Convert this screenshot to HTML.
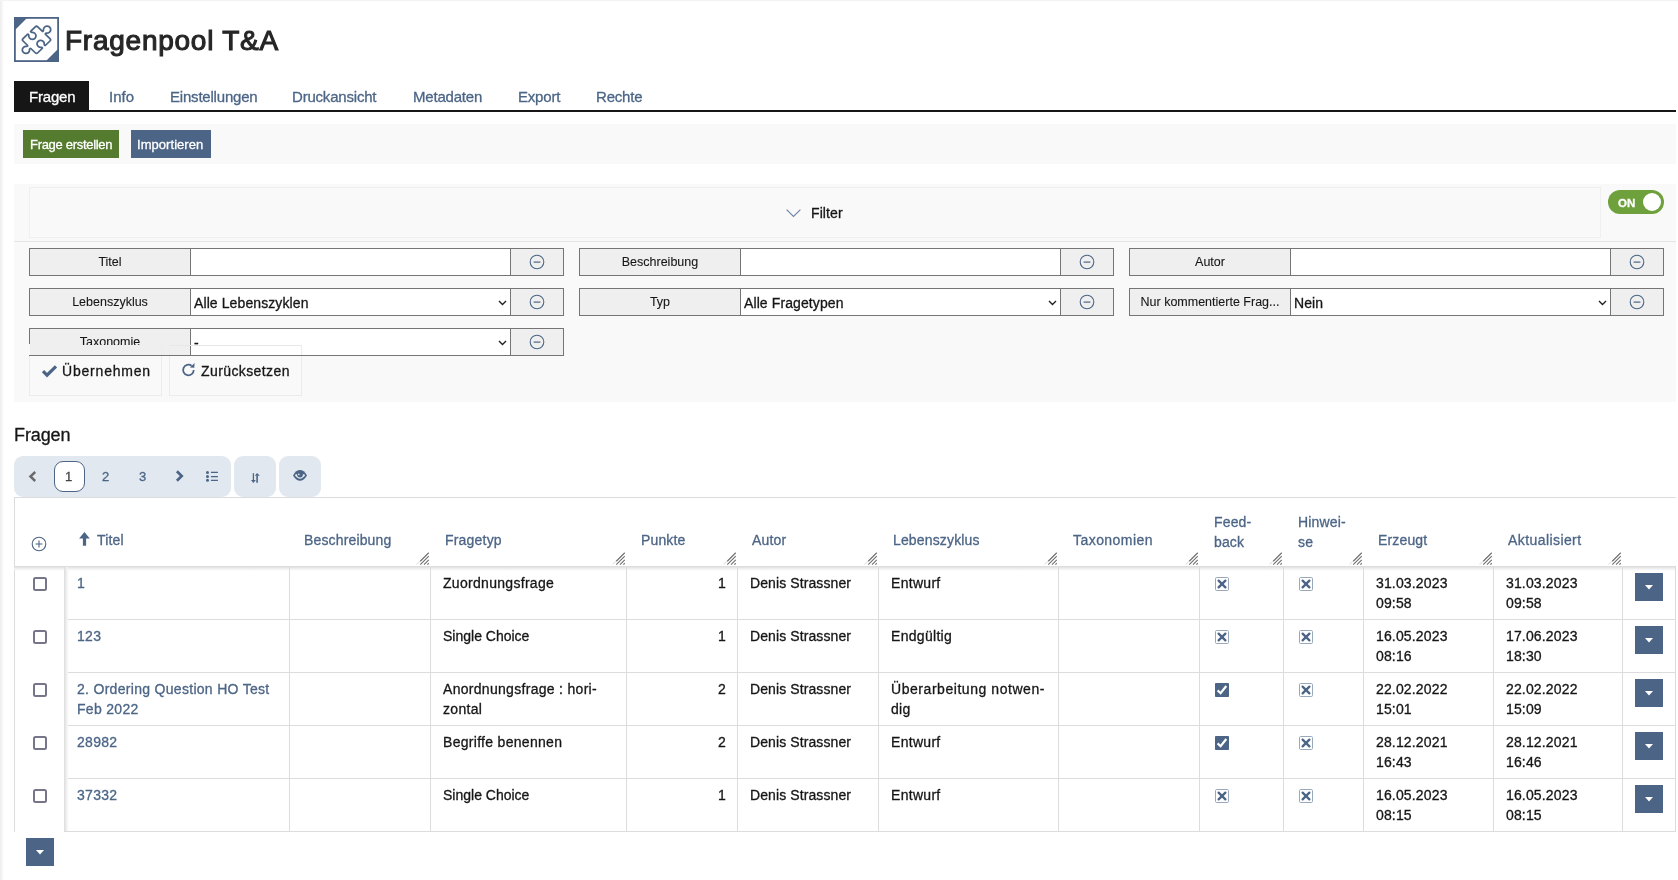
<!DOCTYPE html><html><head><meta charset="utf-8"><style>
html,body{margin:0;padding:0;}
body{width:1678px;height:880px;position:relative;overflow:hidden;background:#fff;font-family:"Liberation Sans",sans-serif;}
.a{position:absolute;box-sizing:border-box;}
.t{position:absolute;white-space:nowrap;will-change:transform;-webkit-text-stroke-width:0.3px;}
svg.a{overflow:visible}
</style></head><body>
<div class="a" style="left:0px;top:0px;width:4px;height:880px;background:linear-gradient(to right,#ececec,#f6f6f6 50%,#fff)"></div>
<div class="a" style="left:0px;top:0px;width:1678px;height:1px;background:#f3f3f3"></div>
<svg class="a" style="left:14px;top:17px" width="45" height="45" viewBox="0 0 45 45"><rect x="0.9" y="0.9" width="43.2" height="43.2" fill="#fff" stroke="#4c6586" stroke-width="1.8"/><path d="M0 0H14L0 14Z" fill="#4c6586"/><path d="M45 45H31L45 31Z" fill="#4c6586"/><path transform="translate(22.5 22.8) scale(1.04 1) translate(-22.5 -22.5) rotate(45 22.5 22.5)" d="M14.2 12.5 H20.2 C20.9 12.5 21.1 11.8 20.5 11 A3.5 3.5 0 1 1 24.5 11 C23.9 11.8 24.1 12.5 24.8 12.5 H30.8 Q32.5 12.5 32.5 14.2 V20.2 C32.5 20.9 31.8 21.1 31 20.5 A3.5 3.5 0 1 0 31 24.5 C31.8 23.9 32.5 24.1 32.5 24.8 V30.8 Q32.5 32.5 30.8 32.5 H24.8 C24.1 32.5 23.9 33.2 24.5 34 A3.5 3.5 0 1 1 20.5 34 C21.1 33.2 20.9 32.5 20.2 32.5 H14.2 Q12.5 32.5 12.5 30.8 V24.8 C12.5 24.1 13.2 23.9 14 24.5 A3.5 3.5 0 1 0 14 20.5 C13.2 21.1 12.5 20.9 12.5 20.2 V14.2 Q12.5 12.5 14.2 12.5 Z" fill="none" stroke="#4c6586" stroke-width="1.7" stroke-linejoin="round"/></svg>
<div class="t" style="top:23.70px;font-size:28px;line-height:34px;color:#262626;letter-spacing:0.75px;left:65.4px;-webkit-text-stroke:1.1px #262626;">Fragenpool T&amp;A</div>
<div class="a" style="left:14px;top:81px;width:75px;height:30px;background:#161616"></div>
<div class="a" style="left:14px;top:110px;width:1662px;height:2px;background:#161616"></div>
<div class="t" style="top:86.80px;font-size:15px;line-height:20px;color:#fff;letter-spacing:-0.2px;left:28.5px;">Fragen</div>
<div class="t" style="top:86.80px;font-size:15px;line-height:20px;color:#4c6586;left:108.5px;">Info</div>
<div class="t" style="top:86.80px;font-size:15px;line-height:20px;color:#4c6586;letter-spacing:-0.2px;left:169.5px;">Einstellungen</div>
<div class="t" style="top:86.80px;font-size:15px;line-height:20px;color:#4c6586;letter-spacing:-0.2px;left:291.5px;">Druckansicht</div>
<div class="t" style="top:86.80px;font-size:15px;line-height:20px;color:#4c6586;letter-spacing:-0.2px;left:412.5px;">Metadaten</div>
<div class="t" style="top:86.80px;font-size:15px;line-height:20px;color:#4c6586;letter-spacing:-0.2px;left:517.5px;">Export</div>
<div class="t" style="top:86.80px;font-size:15px;line-height:20px;color:#4c6586;letter-spacing:-0.2px;left:595.5px;">Rechte</div>
<div class="a" style="left:14px;top:124px;width:1662px;height:40px;background:#f9f9f9"></div>
<div class="a" style="left:23px;top:130px;width:96px;height:28px;background:#557b2e"></div>
<div class="t" style="top:137.00px;font-size:13px;line-height:16px;color:#fff;letter-spacing:-0.3px;left:30px;">Frage erstellen</div>
<div class="a" style="left:131px;top:130px;width:80px;height:28px;background:#4c6586"></div>
<div class="t" style="top:137.00px;font-size:13px;line-height:16px;color:#fff;letter-spacing:0.05px;left:137px;">Importieren</div>
<div class="a" style="left:14px;top:184px;width:1662px;height:218px;background:#f9f9f9"></div>
<div class="a" style="left:29px;top:187px;width:1572px;height:51px;border:1px solid #efefef"></div>
<div class="a" style="left:14px;top:241px;width:1662px;height:1px;background:#e4e4e4"></div>
<svg class="a" style="left:786px;top:209px" width="15" height="8" viewBox="0 0 15 8"><path d="M0.6 0.6 L7.5 7.4 L14.4 0.6" fill="none" stroke="#6b83a3" stroke-width="1.1"/></svg>
<div class="t" style="top:203.85px;font-size:14px;line-height:18px;color:#161616;letter-spacing:0.1px;left:811px;">Filter</div>
<div class="a" style="left:1608px;top:190px;width:56px;height:24px;background:#6ea03c;border-radius:12px"></div>
<div class="a" style="left:1643px;top:193px;width:18px;height:18px;background:#fff;border-radius:50%"></div>
<div class="t" style="top:195.62px;font-size:11.5px;line-height:14px;color:#fff;font-weight:bold;left:1618px;">ON</div>
<div class="a" style="left:29px;top:248px;width:162px;height:28px;background:#efefef;border:1px solid #757575"></div>
<div class="a" style="left:190px;top:248px;width:321px;height:28px;background:#fff;border:1px solid #757575"></div>
<div class="a" style="left:510px;top:248px;width:54px;height:28px;background:#efefef;border:1px solid #757575"></div>
<div class="t" style="top:253.97px;font-size:12.5px;line-height:16px;color:#161616;left:30.0px;width:160px;text-align:center;-webkit-text-stroke-width:0.1px;">Titel</div>
<svg class="a" style="left:528.5px;top:253.8px" width="16" height="16" viewBox="0 0 16 16"><circle cx="8" cy="8" r="6.8" fill="none" stroke="#4c6586" stroke-width="1.1"/><path d="M4.6 8.1H11.4" stroke="#4c6586" stroke-width="1.2"/></svg>
<div class="a" style="left:579px;top:248px;width:162px;height:28px;background:#efefef;border:1px solid #757575"></div>
<div class="a" style="left:740px;top:248px;width:321px;height:28px;background:#fff;border:1px solid #757575"></div>
<div class="a" style="left:1060px;top:248px;width:54px;height:28px;background:#efefef;border:1px solid #757575"></div>
<div class="t" style="top:253.97px;font-size:12.5px;line-height:16px;color:#161616;left:580.0px;width:160px;text-align:center;-webkit-text-stroke-width:0.1px;">Beschreibung</div>
<svg class="a" style="left:1078.5px;top:253.8px" width="16" height="16" viewBox="0 0 16 16"><circle cx="8" cy="8" r="6.8" fill="none" stroke="#4c6586" stroke-width="1.1"/><path d="M4.6 8.1H11.4" stroke="#4c6586" stroke-width="1.2"/></svg>
<div class="a" style="left:1129px;top:248px;width:162px;height:28px;background:#efefef;border:1px solid #757575"></div>
<div class="a" style="left:1290px;top:248px;width:321px;height:28px;background:#fff;border:1px solid #757575"></div>
<div class="a" style="left:1610px;top:248px;width:54px;height:28px;background:#efefef;border:1px solid #757575"></div>
<div class="t" style="top:253.97px;font-size:12.5px;line-height:16px;color:#161616;left:1130.0px;width:160px;text-align:center;-webkit-text-stroke-width:0.1px;">Autor</div>
<svg class="a" style="left:1628.5px;top:253.8px" width="16" height="16" viewBox="0 0 16 16"><circle cx="8" cy="8" r="6.8" fill="none" stroke="#4c6586" stroke-width="1.1"/><path d="M4.6 8.1H11.4" stroke="#4c6586" stroke-width="1.2"/></svg>
<div class="a" style="left:29px;top:288px;width:162px;height:28px;background:#efefef;border:1px solid #757575"></div>
<div class="a" style="left:190px;top:288px;width:321px;height:28px;background:#fff;border:1px solid #757575"></div>
<div class="a" style="left:510px;top:288px;width:54px;height:28px;background:#efefef;border:1px solid #757575"></div>
<div class="t" style="top:293.97px;font-size:12.5px;line-height:16px;color:#161616;left:30.0px;width:160px;text-align:center;-webkit-text-stroke-width:0.1px;">Lebenszyklus</div>
<div class="t" style="top:293.65px;font-size:14px;line-height:18px;color:#161616;letter-spacing:0.1px;left:194px;">Alle Lebenszyklen</div>
<svg class="a" style="left:498.2px;top:299.5px" width="9" height="6" viewBox="0 0 9 6"><path d="M1 1 L4.5 4.5 L8 1" fill="none" stroke="#222" stroke-width="1.4"/></svg>
<svg class="a" style="left:528.5px;top:293.8px" width="16" height="16" viewBox="0 0 16 16"><circle cx="8" cy="8" r="6.8" fill="none" stroke="#4c6586" stroke-width="1.1"/><path d="M4.6 8.1H11.4" stroke="#4c6586" stroke-width="1.2"/></svg>
<div class="a" style="left:579px;top:288px;width:162px;height:28px;background:#efefef;border:1px solid #757575"></div>
<div class="a" style="left:740px;top:288px;width:321px;height:28px;background:#fff;border:1px solid #757575"></div>
<div class="a" style="left:1060px;top:288px;width:54px;height:28px;background:#efefef;border:1px solid #757575"></div>
<div class="t" style="top:293.97px;font-size:12.5px;line-height:16px;color:#161616;left:580.0px;width:160px;text-align:center;-webkit-text-stroke-width:0.1px;">Typ</div>
<div class="t" style="top:293.65px;font-size:14px;line-height:18px;color:#161616;letter-spacing:0.1px;left:744px;">Alle Fragetypen</div>
<svg class="a" style="left:1048.2px;top:299.5px" width="9" height="6" viewBox="0 0 9 6"><path d="M1 1 L4.5 4.5 L8 1" fill="none" stroke="#222" stroke-width="1.4"/></svg>
<svg class="a" style="left:1078.5px;top:293.8px" width="16" height="16" viewBox="0 0 16 16"><circle cx="8" cy="8" r="6.8" fill="none" stroke="#4c6586" stroke-width="1.1"/><path d="M4.6 8.1H11.4" stroke="#4c6586" stroke-width="1.2"/></svg>
<div class="a" style="left:1129px;top:288px;width:162px;height:28px;background:#efefef;border:1px solid #757575"></div>
<div class="a" style="left:1290px;top:288px;width:321px;height:28px;background:#fff;border:1px solid #757575"></div>
<div class="a" style="left:1610px;top:288px;width:54px;height:28px;background:#efefef;border:1px solid #757575"></div>
<div class="t" style="top:293.97px;font-size:12.5px;line-height:16px;color:#161616;left:1130.0px;width:160px;text-align:center;-webkit-text-stroke-width:0.1px;">Nur kommentierte Frag...</div>
<div class="t" style="top:293.65px;font-size:14px;line-height:18px;color:#161616;letter-spacing:0.1px;left:1294px;">Nein</div>
<svg class="a" style="left:1598.2px;top:299.5px" width="9" height="6" viewBox="0 0 9 6"><path d="M1 1 L4.5 4.5 L8 1" fill="none" stroke="#222" stroke-width="1.4"/></svg>
<svg class="a" style="left:1628.5px;top:293.8px" width="16" height="16" viewBox="0 0 16 16"><circle cx="8" cy="8" r="6.8" fill="none" stroke="#4c6586" stroke-width="1.1"/><path d="M4.6 8.1H11.4" stroke="#4c6586" stroke-width="1.2"/></svg>
<div class="a" style="left:29px;top:328px;width:162px;height:28px;background:#efefef;border:1px solid #757575"></div>
<div class="a" style="left:190px;top:328px;width:321px;height:28px;background:#fff;border:1px solid #757575"></div>
<div class="a" style="left:510px;top:328px;width:54px;height:28px;background:#efefef;border:1px solid #757575"></div>
<div class="t" style="top:333.65px;font-size:14px;line-height:18px;color:#161616;letter-spacing:0.1px;left:194px;">-</div>
<svg class="a" style="left:498.2px;top:339.5px" width="9" height="6" viewBox="0 0 9 6"><path d="M1 1 L4.5 4.5 L8 1" fill="none" stroke="#222" stroke-width="1.4"/></svg>
<svg class="a" style="left:528.5px;top:333.8px" width="16" height="16" viewBox="0 0 16 16"><circle cx="8" cy="8" r="6.8" fill="none" stroke="#4c6586" stroke-width="1.1"/><path d="M4.6 8.1H11.4" stroke="#4c6586" stroke-width="1.2"/></svg>
<div class="a" style="left:30px;top:329px;width:160px;height:16px;overflow:hidden"><div class="t" style="left:0;width:160px;text-align:center;top:4.6px;font-size:12.5px;line-height:16px;color:#161616;-webkit-text-stroke-width:0.1px">Taxonomie</div></div>
<div class="a" style="left:29px;top:345px;width:133px;height:51px;border:1px solid #ececec;border-top-color:transparent"></div>
<div class="a" style="left:169px;top:345px;width:133px;height:51px;border:1px solid #ececec"></div>
<div class="a" style="left:29px;top:344px;width:1px;height:11px;background:#f9f9f9"></div>
<div class="a" style="left:170px;top:345px;width:131px;height:1px;background:#e8e8e8"></div>
<div class="a" style="left:29px;top:355px;width:535px;height:1px;background:#757575"></div>
<svg class="a" style="left:42px;top:364.5px" width="15" height="12" viewBox="0 0 15 12"><path d="M1 6.2 L5 10.2 L14 1.3" fill="none" stroke="#4c6586" stroke-width="3.2" stroke-linejoin="miter"/></svg>
<div class="t" style="top:361.65px;font-size:14px;line-height:18px;color:#161616;letter-spacing:0.8px;left:62px;">&Uuml;bernehmen</div>
<svg class="a" style="left:181px;top:363px" width="15" height="14" viewBox="0 0 15 14"><path d="M12.7 7 A5.3 5.3 0 1 1 10.6 2.8" fill="none" stroke="#4c6586" stroke-width="1.8"/><path d="M8.9 4.6 L13.6 0.1 L13.3 4.8 Z" fill="#4c6586"/></svg>
<div class="t" style="top:361.65px;font-size:14px;line-height:18px;color:#161616;letter-spacing:0.4px;left:201px;">Zur&uuml;cksetzen</div>
<div class="t" style="top:423.76px;font-size:18px;line-height:22px;color:#161616;letter-spacing:-0.1px;left:13.5px;">Fragen</div>
<div class="a" style="left:14px;top:456px;width:217px;height:41px;background:#e2e8ef;border-radius:9px"></div>
<div class="a" style="left:234px;top:456px;width:42px;height:41px;background:#e2e8ef;border-radius:9px"></div>
<div class="a" style="left:279px;top:456px;width:42px;height:41px;background:#e2e8ef;border-radius:9px"></div>
<div class="a" style="left:54px;top:461px;width:31px;height:31px;background:#fff;border:1.5px solid #4c6586;border-radius:9px"></div>
<svg class="a" style="left:28px;top:471px" width="9" height="11" viewBox="0 0 9 11"><path d="M7.2 1 L2.4 5.5 L7.2 10" fill="none" stroke="#6a6a6a" stroke-width="2.4"/></svg>
<div class="t" style="top:468.50px;font-size:13px;line-height:16px;color:#444;left:65px;">1</div>
<div class="t" style="top:468.50px;font-size:13px;line-height:16px;color:#4c6586;left:102px;">2</div>
<div class="t" style="top:468.50px;font-size:13px;line-height:16px;color:#4c6586;left:138.5px;">3</div>
<svg class="a" style="left:175px;top:470.1px" width="9" height="12" viewBox="0 0 9 12"><path d="M1.9 1.3 L6.7 6 L1.9 10.7" fill="none" stroke="#4c6586" stroke-width="2.7"/></svg>
<svg class="a" style="left:205px;top:471px" width="14" height="12" viewBox="0 0 14 12"><circle cx="2.5" cy="1.45" r="1.5" fill="#4c6586"/><circle cx="2.5" cy="5.5" r="1.5" fill="#4c6586"/><circle cx="2.5" cy="9.35" r="1.5" fill="#4c6586"/><path d="M5.9 1.45H12.9M5.9 5.5H12.9M5.9 9.35H12.9" stroke="#4c6586" stroke-width="1.25"/></svg>
<svg class="a" style="left:250px;top:472px" width="11" height="12" viewBox="0 0 11 12"><path d="M3.4 1.2V9" stroke="#4c6586" stroke-width="1.3"/><path d="M1 8.1 L5.8 8.1 L3.4 10.9Z" fill="#4c6586"/><path d="M7.1 10.8V3.4" stroke="#4c6586" stroke-width="1.6"/><path d="M4.8 3.8 L9.8 3.8 L7.1 1.1Z" fill="#4c6586"/></svg>
<svg class="a" style="left:293px;top:470px" width="14" height="11" viewBox="0 0 14 11"><path d="M0 5.4 C2 1.8 4.5 0 7 0 S12 1.8 14 5.4 C12 9 9.5 10.75 7 10.75 S2 9 0 5.4Z" fill="#4c6586"/><path d="M2.7 4.3 H11.3 C11.6 4.6 11.9 5 12.1 5.3 C10.5 7.6 8.8 8.8 7 8.8 S3.5 7.6 1.9 5.3 C2.1 5 2.4 4.6 2.7 4.3Z" fill="#e2e8ef"/><circle cx="7" cy="4.6" r="2.9" fill="#4c6586"/><circle cx="5.8" cy="4.4" r="0.8" fill="#e2e8ef"/></svg>
<div class="a" style="left:14px;top:497px;width:1662px;height:1px;background:#dcdcdc"></div>
<div class="a" style="left:14px;top:497px;width:1px;height:335px;background:#dcdcdc"></div>
<div class="a" style="left:14px;top:566px;width:1662px;height:5px;background:linear-gradient(#d8d8d8,#e3e3e3 25%,#f4f4f4 65%,rgba(255,255,255,0))"></div>
<div class="t" style="top:530.15px;font-size:14px;line-height:20px;color:#4c6586;letter-spacing:0.15px;left:97px;">Titel</div>
<div class="t" style="top:530.15px;font-size:14px;line-height:20px;color:#4c6586;letter-spacing:0.15px;left:304px;">Beschreibung</div>
<div class="t" style="top:530.15px;font-size:14px;line-height:20px;color:#4c6586;letter-spacing:0.2px;left:445px;">Fragetyp</div>
<div class="t" style="top:530.15px;font-size:14px;line-height:20px;color:#4c6586;letter-spacing:0.15px;left:641px;">Punkte</div>
<div class="t" style="top:530.15px;font-size:14px;line-height:20px;color:#4c6586;letter-spacing:0.15px;left:752px;">Autor</div>
<div class="t" style="top:530.15px;font-size:14px;line-height:20px;color:#4c6586;letter-spacing:0.15px;left:893px;">Lebenszyklus</div>
<div class="t" style="top:530.15px;font-size:14px;line-height:20px;color:#4c6586;letter-spacing:0.45px;left:1073px;">Taxonomien</div>
<div class="t" style="top:512.15px;font-size:14px;line-height:20px;color:#4c6586;letter-spacing:0.15px;left:1214px;">Feed-</div>
<div class="t" style="top:532.15px;font-size:14px;line-height:20px;color:#4c6586;letter-spacing:0.15px;left:1214px;">back</div>
<div class="t" style="top:512.15px;font-size:14px;line-height:20px;color:#4c6586;letter-spacing:0.15px;left:1298px;">Hinwei-</div>
<div class="t" style="top:532.15px;font-size:14px;line-height:20px;color:#4c6586;letter-spacing:0.15px;left:1298px;">se</div>
<div class="t" style="top:530.15px;font-size:14px;line-height:20px;color:#4c6586;letter-spacing:0.15px;left:1378px;">Erzeugt</div>
<div class="t" style="top:530.15px;font-size:14px;line-height:20px;color:#4c6586;letter-spacing:0.42px;left:1508px;">Aktualisiert</div>
<svg class="a" style="left:418px;top:552px" width="11" height="13" viewBox="0 0 11 13"><path d="M-1.5 12.4 L2.3 8.9" stroke="#e4e4e4" stroke-width="1.1"/><path d="M2.25 9.25 L10.75 0.75 M2.25 12.6 L10.75 4.1 M6 12.6 L10.75 7.85 M9.4 12.6 L10.75 11.25" stroke="#6e6e6e" stroke-width="1.1"/></svg>
<svg class="a" style="left:614px;top:552px" width="11" height="13" viewBox="0 0 11 13"><path d="M-1.5 12.4 L2.3 8.9" stroke="#e4e4e4" stroke-width="1.1"/><path d="M2.25 9.25 L10.75 0.75 M2.25 12.6 L10.75 4.1 M6 12.6 L10.75 7.85 M9.4 12.6 L10.75 11.25" stroke="#6e6e6e" stroke-width="1.1"/></svg>
<svg class="a" style="left:725px;top:552px" width="11" height="13" viewBox="0 0 11 13"><path d="M-1.5 12.4 L2.3 8.9" stroke="#e4e4e4" stroke-width="1.1"/><path d="M2.25 9.25 L10.75 0.75 M2.25 12.6 L10.75 4.1 M6 12.6 L10.75 7.85 M9.4 12.6 L10.75 11.25" stroke="#6e6e6e" stroke-width="1.1"/></svg>
<svg class="a" style="left:866px;top:552px" width="11" height="13" viewBox="0 0 11 13"><path d="M-1.5 12.4 L2.3 8.9" stroke="#e4e4e4" stroke-width="1.1"/><path d="M2.25 9.25 L10.75 0.75 M2.25 12.6 L10.75 4.1 M6 12.6 L10.75 7.85 M9.4 12.6 L10.75 11.25" stroke="#6e6e6e" stroke-width="1.1"/></svg>
<svg class="a" style="left:1046px;top:552px" width="11" height="13" viewBox="0 0 11 13"><path d="M-1.5 12.4 L2.3 8.9" stroke="#e4e4e4" stroke-width="1.1"/><path d="M2.25 9.25 L10.75 0.75 M2.25 12.6 L10.75 4.1 M6 12.6 L10.75 7.85 M9.4 12.6 L10.75 11.25" stroke="#6e6e6e" stroke-width="1.1"/></svg>
<svg class="a" style="left:1187px;top:552px" width="11" height="13" viewBox="0 0 11 13"><path d="M-1.5 12.4 L2.3 8.9" stroke="#e4e4e4" stroke-width="1.1"/><path d="M2.25 9.25 L10.75 0.75 M2.25 12.6 L10.75 4.1 M6 12.6 L10.75 7.85 M9.4 12.6 L10.75 11.25" stroke="#6e6e6e" stroke-width="1.1"/></svg>
<svg class="a" style="left:1271px;top:552px" width="11" height="13" viewBox="0 0 11 13"><path d="M-1.5 12.4 L2.3 8.9" stroke="#e4e4e4" stroke-width="1.1"/><path d="M2.25 9.25 L10.75 0.75 M2.25 12.6 L10.75 4.1 M6 12.6 L10.75 7.85 M9.4 12.6 L10.75 11.25" stroke="#6e6e6e" stroke-width="1.1"/></svg>
<svg class="a" style="left:1351px;top:552px" width="11" height="13" viewBox="0 0 11 13"><path d="M-1.5 12.4 L2.3 8.9" stroke="#e4e4e4" stroke-width="1.1"/><path d="M2.25 9.25 L10.75 0.75 M2.25 12.6 L10.75 4.1 M6 12.6 L10.75 7.85 M9.4 12.6 L10.75 11.25" stroke="#6e6e6e" stroke-width="1.1"/></svg>
<svg class="a" style="left:1481px;top:552px" width="11" height="13" viewBox="0 0 11 13"><path d="M-1.5 12.4 L2.3 8.9" stroke="#e4e4e4" stroke-width="1.1"/><path d="M2.25 9.25 L10.75 0.75 M2.25 12.6 L10.75 4.1 M6 12.6 L10.75 7.85 M9.4 12.6 L10.75 11.25" stroke="#6e6e6e" stroke-width="1.1"/></svg>
<svg class="a" style="left:1610px;top:552px" width="11" height="13" viewBox="0 0 11 13"><path d="M-1.5 12.4 L2.3 8.9" stroke="#e4e4e4" stroke-width="1.1"/><path d="M2.25 9.25 L10.75 0.75 M2.25 12.6 L10.75 4.1 M6 12.6 L10.75 7.85 M9.4 12.6 L10.75 11.25" stroke="#6e6e6e" stroke-width="1.1"/></svg>
<svg class="a" style="left:31px;top:536px" width="16" height="16" viewBox="0 0 16 16"><circle cx="8" cy="8" r="6.8" fill="none" stroke="#4c6586" stroke-width="1.1"/><path d="M4.6 8H11.4M8 4.6V11.4" stroke="#4c6586" stroke-width="1.1"/></svg>
<svg class="a" style="left:79px;top:532px" width="11" height="14" viewBox="0 0 11 14"><path d="M5.45 0 L10.8 6.6 H7.1 V13.7 H3.9 V6.6 H0.1Z" fill="#4c6586"/></svg>
<div class="a" style="left:64px;top:619px;width:1612px;height:1px;background:#dcdcdc"></div>
<div class="a" style="left:64px;top:672px;width:1612px;height:1px;background:#dcdcdc"></div>
<div class="a" style="left:64px;top:725px;width:1612px;height:1px;background:#dcdcdc"></div>
<div class="a" style="left:64px;top:778px;width:1612px;height:1px;background:#dcdcdc"></div>
<div class="a" style="left:64px;top:831px;width:1612px;height:1px;background:#dcdcdc"></div>
<div class="a" style="left:289px;top:567px;width:1px;height:265px;background:#dcdcdc"></div>
<div class="a" style="left:430px;top:567px;width:1px;height:265px;background:#dcdcdc"></div>
<div class="a" style="left:626px;top:567px;width:1px;height:265px;background:#dcdcdc"></div>
<div class="a" style="left:737px;top:567px;width:1px;height:265px;background:#dcdcdc"></div>
<div class="a" style="left:878px;top:567px;width:1px;height:265px;background:#dcdcdc"></div>
<div class="a" style="left:1058px;top:567px;width:1px;height:265px;background:#dcdcdc"></div>
<div class="a" style="left:1199px;top:567px;width:1px;height:265px;background:#dcdcdc"></div>
<div class="a" style="left:1283px;top:567px;width:1px;height:265px;background:#dcdcdc"></div>
<div class="a" style="left:1363px;top:567px;width:1px;height:265px;background:#dcdcdc"></div>
<div class="a" style="left:1493px;top:567px;width:1px;height:265px;background:#dcdcdc"></div>
<div class="a" style="left:1622px;top:567px;width:1px;height:265px;background:#dcdcdc"></div>
<div class="a" style="left:1675px;top:566px;width:1px;height:266px;background:#dcdcdc"></div>
<div class="a" style="left:64px;top:567px;width:5px;height:265px;background:linear-gradient(to right,#dcdcdc,#e6e6e6 25%,#f5f5f5 65%,rgba(255,255,255,0))"></div>
<div class="a" style="left:33px;top:577px;width:14px;height:14px;border:2px solid #767589;border-radius:2.5px"></div>
<div class="t" style="top:573.15px;font-size:14px;line-height:20px;color:#4c6586;letter-spacing:0.3px;left:77.0px;">1</div>
<div class="t" style="top:573.15px;font-size:14px;line-height:20px;color:#161616;letter-spacing:0.3px;left:443.0px;">Zuordnungsfrage</div>
<div class="t" style="top:573.15px;font-size:14px;line-height:20px;color:#161616;right:952.5px;text-align:right;">1</div>
<div class="t" style="top:573.15px;font-size:14px;line-height:20px;color:#161616;letter-spacing:0.1px;left:750.0px;">Denis Strassner</div>
<div class="t" style="top:573.15px;font-size:14px;line-height:20px;color:#161616;letter-spacing:0.3px;left:891.0px;">Entwurf</div>
<svg class="a" style="left:1215px;top:577px" width="14" height="14" viewBox="0 0 14 14"><rect x="0.5" y="0.5" width="13" height="13" rx="1.2" fill="#fff" stroke="#9aa8bc" stroke-width="1"/><path d="M3.6 3.6 L10.4 10.4 M10.4 3.6 L3.6 10.4" stroke="#4c6586" stroke-width="2.3" stroke-linecap="round"/></svg>
<svg class="a" style="left:1299px;top:577px" width="14" height="14" viewBox="0 0 14 14"><rect x="0.5" y="0.5" width="13" height="13" rx="1.2" fill="#fff" stroke="#9aa8bc" stroke-width="1"/><path d="M3.6 3.6 L10.4 10.4 M10.4 3.6 L3.6 10.4" stroke="#4c6586" stroke-width="2.3" stroke-linecap="round"/></svg>
<div class="t" style="top:573.15px;font-size:14px;line-height:20px;color:#161616;letter-spacing:0.15px;left:1376.0px;">31.03.2023</div>
<div class="t" style="top:593.15px;font-size:14px;line-height:20px;color:#161616;letter-spacing:0.15px;left:1376.0px;">09:58</div>
<div class="t" style="top:573.15px;font-size:14px;line-height:20px;color:#161616;letter-spacing:0.15px;left:1506.0px;">31.03.2023</div>
<div class="t" style="top:593.15px;font-size:14px;line-height:20px;color:#161616;letter-spacing:0.15px;left:1506.0px;">09:58</div>
<div class="a" style="left:1635px;top:573px;width:28px;height:28px;background:#4c6586"></div>
<svg class="a" style="left:1645px;top:585px" width="8" height="5" viewBox="0 0 8 5"><path d="M0 0H8L4 4.5Z" fill="#fff"/></svg>
<div class="a" style="left:33px;top:630px;width:14px;height:14px;border:2px solid #767589;border-radius:2.5px"></div>
<div class="t" style="top:626.15px;font-size:14px;line-height:20px;color:#4c6586;letter-spacing:0.3px;left:77.0px;">123</div>
<div class="t" style="top:626.15px;font-size:14px;line-height:20px;color:#161616;left:443.0px;">Single Choice</div>
<div class="t" style="top:626.15px;font-size:14px;line-height:20px;color:#161616;right:952.5px;text-align:right;">1</div>
<div class="t" style="top:626.15px;font-size:14px;line-height:20px;color:#161616;letter-spacing:0.1px;left:750.0px;">Denis Strassner</div>
<div class="t" style="top:626.15px;font-size:14px;line-height:20px;color:#161616;letter-spacing:0.3px;left:891.0px;">Endg&uuml;ltig</div>
<svg class="a" style="left:1215px;top:630px" width="14" height="14" viewBox="0 0 14 14"><rect x="0.5" y="0.5" width="13" height="13" rx="1.2" fill="#fff" stroke="#9aa8bc" stroke-width="1"/><path d="M3.6 3.6 L10.4 10.4 M10.4 3.6 L3.6 10.4" stroke="#4c6586" stroke-width="2.3" stroke-linecap="round"/></svg>
<svg class="a" style="left:1299px;top:630px" width="14" height="14" viewBox="0 0 14 14"><rect x="0.5" y="0.5" width="13" height="13" rx="1.2" fill="#fff" stroke="#9aa8bc" stroke-width="1"/><path d="M3.6 3.6 L10.4 10.4 M10.4 3.6 L3.6 10.4" stroke="#4c6586" stroke-width="2.3" stroke-linecap="round"/></svg>
<div class="t" style="top:626.15px;font-size:14px;line-height:20px;color:#161616;letter-spacing:0.15px;left:1376.0px;">16.05.2023</div>
<div class="t" style="top:646.15px;font-size:14px;line-height:20px;color:#161616;letter-spacing:0.15px;left:1376.0px;">08:16</div>
<div class="t" style="top:626.15px;font-size:14px;line-height:20px;color:#161616;letter-spacing:0.15px;left:1506.0px;">17.06.2023</div>
<div class="t" style="top:646.15px;font-size:14px;line-height:20px;color:#161616;letter-spacing:0.15px;left:1506.0px;">18:30</div>
<div class="a" style="left:1635px;top:626px;width:28px;height:28px;background:#4c6586"></div>
<svg class="a" style="left:1645px;top:638px" width="8" height="5" viewBox="0 0 8 5"><path d="M0 0H8L4 4.5Z" fill="#fff"/></svg>
<div class="a" style="left:33px;top:683px;width:14px;height:14px;border:2px solid #767589;border-radius:2.5px"></div>
<div class="t" style="top:679.15px;font-size:14px;line-height:20px;color:#4c6586;letter-spacing:0.3px;left:77.0px;">2. Ordering Question HO Test</div>
<div class="t" style="top:699.15px;font-size:14px;line-height:20px;color:#4c6586;letter-spacing:0.3px;left:77.0px;">Feb 2022</div>
<div class="t" style="top:679.15px;font-size:14px;line-height:20px;color:#161616;letter-spacing:0.3px;left:443.0px;">Anordnungsfrage : hori-</div>
<div class="t" style="top:699.15px;font-size:14px;line-height:20px;color:#161616;letter-spacing:0.3px;left:443.0px;">zontal</div>
<div class="t" style="top:679.15px;font-size:14px;line-height:20px;color:#161616;right:952.5px;text-align:right;">2</div>
<div class="t" style="top:679.15px;font-size:14px;line-height:20px;color:#161616;letter-spacing:0.1px;left:750.0px;">Denis Strassner</div>
<div class="t" style="top:679.15px;font-size:14px;line-height:20px;color:#161616;letter-spacing:0.55px;left:891.0px;">&Uuml;berarbeitung notwen-</div>
<div class="t" style="top:699.15px;font-size:14px;line-height:20px;color:#161616;letter-spacing:0.3px;left:891.0px;">dig</div>
<svg class="a" style="left:1215px;top:683px" width="14" height="14" viewBox="0 0 14 14"><rect x="0" y="0" width="14" height="14" rx="0.8" fill="#4c6586"/><path d="M2.6 7.4 L5.6 10.2 L11.3 3" fill="none" stroke="#fff" stroke-width="2.2"/></svg>
<svg class="a" style="left:1299px;top:683px" width="14" height="14" viewBox="0 0 14 14"><rect x="0.5" y="0.5" width="13" height="13" rx="1.2" fill="#fff" stroke="#9aa8bc" stroke-width="1"/><path d="M3.6 3.6 L10.4 10.4 M10.4 3.6 L3.6 10.4" stroke="#4c6586" stroke-width="2.3" stroke-linecap="round"/></svg>
<div class="t" style="top:679.15px;font-size:14px;line-height:20px;color:#161616;letter-spacing:0.15px;left:1376.0px;">22.02.2022</div>
<div class="t" style="top:699.15px;font-size:14px;line-height:20px;color:#161616;letter-spacing:0.15px;left:1376.0px;">15:01</div>
<div class="t" style="top:679.15px;font-size:14px;line-height:20px;color:#161616;letter-spacing:0.15px;left:1506.0px;">22.02.2022</div>
<div class="t" style="top:699.15px;font-size:14px;line-height:20px;color:#161616;letter-spacing:0.15px;left:1506.0px;">15:09</div>
<div class="a" style="left:1635px;top:679px;width:28px;height:28px;background:#4c6586"></div>
<svg class="a" style="left:1645px;top:691px" width="8" height="5" viewBox="0 0 8 5"><path d="M0 0H8L4 4.5Z" fill="#fff"/></svg>
<div class="a" style="left:33px;top:736px;width:14px;height:14px;border:2px solid #767589;border-radius:2.5px"></div>
<div class="t" style="top:732.15px;font-size:14px;line-height:20px;color:#4c6586;letter-spacing:0.3px;left:77.0px;">28982</div>
<div class="t" style="top:732.15px;font-size:14px;line-height:20px;color:#161616;letter-spacing:0.3px;left:443.0px;">Begriffe benennen</div>
<div class="t" style="top:732.15px;font-size:14px;line-height:20px;color:#161616;right:952.5px;text-align:right;">2</div>
<div class="t" style="top:732.15px;font-size:14px;line-height:20px;color:#161616;letter-spacing:0.1px;left:750.0px;">Denis Strassner</div>
<div class="t" style="top:732.15px;font-size:14px;line-height:20px;color:#161616;letter-spacing:0.3px;left:891.0px;">Entwurf</div>
<svg class="a" style="left:1215px;top:736px" width="14" height="14" viewBox="0 0 14 14"><rect x="0" y="0" width="14" height="14" rx="0.8" fill="#4c6586"/><path d="M2.6 7.4 L5.6 10.2 L11.3 3" fill="none" stroke="#fff" stroke-width="2.2"/></svg>
<svg class="a" style="left:1299px;top:736px" width="14" height="14" viewBox="0 0 14 14"><rect x="0.5" y="0.5" width="13" height="13" rx="1.2" fill="#fff" stroke="#9aa8bc" stroke-width="1"/><path d="M3.6 3.6 L10.4 10.4 M10.4 3.6 L3.6 10.4" stroke="#4c6586" stroke-width="2.3" stroke-linecap="round"/></svg>
<div class="t" style="top:732.15px;font-size:14px;line-height:20px;color:#161616;letter-spacing:0.15px;left:1376.0px;">28.12.2021</div>
<div class="t" style="top:752.15px;font-size:14px;line-height:20px;color:#161616;letter-spacing:0.15px;left:1376.0px;">16:43</div>
<div class="t" style="top:732.15px;font-size:14px;line-height:20px;color:#161616;letter-spacing:0.15px;left:1506.0px;">28.12.2021</div>
<div class="t" style="top:752.15px;font-size:14px;line-height:20px;color:#161616;letter-spacing:0.15px;left:1506.0px;">16:46</div>
<div class="a" style="left:1635px;top:732px;width:28px;height:28px;background:#4c6586"></div>
<svg class="a" style="left:1645px;top:744px" width="8" height="5" viewBox="0 0 8 5"><path d="M0 0H8L4 4.5Z" fill="#fff"/></svg>
<div class="a" style="left:33px;top:789px;width:14px;height:14px;border:2px solid #767589;border-radius:2.5px"></div>
<div class="t" style="top:785.15px;font-size:14px;line-height:20px;color:#4c6586;letter-spacing:0.3px;left:77.0px;">37332</div>
<div class="t" style="top:785.15px;font-size:14px;line-height:20px;color:#161616;left:443.0px;">Single Choice</div>
<div class="t" style="top:785.15px;font-size:14px;line-height:20px;color:#161616;right:952.5px;text-align:right;">1</div>
<div class="t" style="top:785.15px;font-size:14px;line-height:20px;color:#161616;letter-spacing:0.1px;left:750.0px;">Denis Strassner</div>
<div class="t" style="top:785.15px;font-size:14px;line-height:20px;color:#161616;letter-spacing:0.3px;left:891.0px;">Entwurf</div>
<svg class="a" style="left:1215px;top:789px" width="14" height="14" viewBox="0 0 14 14"><rect x="0.5" y="0.5" width="13" height="13" rx="1.2" fill="#fff" stroke="#9aa8bc" stroke-width="1"/><path d="M3.6 3.6 L10.4 10.4 M10.4 3.6 L3.6 10.4" stroke="#4c6586" stroke-width="2.3" stroke-linecap="round"/></svg>
<svg class="a" style="left:1299px;top:789px" width="14" height="14" viewBox="0 0 14 14"><rect x="0.5" y="0.5" width="13" height="13" rx="1.2" fill="#fff" stroke="#9aa8bc" stroke-width="1"/><path d="M3.6 3.6 L10.4 10.4 M10.4 3.6 L3.6 10.4" stroke="#4c6586" stroke-width="2.3" stroke-linecap="round"/></svg>
<div class="t" style="top:785.15px;font-size:14px;line-height:20px;color:#161616;letter-spacing:0.15px;left:1376.0px;">16.05.2023</div>
<div class="t" style="top:805.15px;font-size:14px;line-height:20px;color:#161616;letter-spacing:0.15px;left:1376.0px;">08:15</div>
<div class="t" style="top:785.15px;font-size:14px;line-height:20px;color:#161616;letter-spacing:0.15px;left:1506.0px;">16.05.2023</div>
<div class="t" style="top:805.15px;font-size:14px;line-height:20px;color:#161616;letter-spacing:0.15px;left:1506.0px;">08:15</div>
<div class="a" style="left:1635px;top:785px;width:28px;height:28px;background:#4c6586"></div>
<svg class="a" style="left:1645px;top:797px" width="8" height="5" viewBox="0 0 8 5"><path d="M0 0H8L4 4.5Z" fill="#fff"/></svg>
<div class="a" style="left:64px;top:831px;width:1612px;height:1px;background:#dcdcdc"></div>
<div class="a" style="left:26px;top:838px;width:28px;height:28px;background:#4c6586"></div>
<svg class="a" style="left:36px;top:850px" width="8" height="5" viewBox="0 0 8 5"><path d="M0 0H8L4 4.5Z" fill="#fff"/></svg>
</body></html>
